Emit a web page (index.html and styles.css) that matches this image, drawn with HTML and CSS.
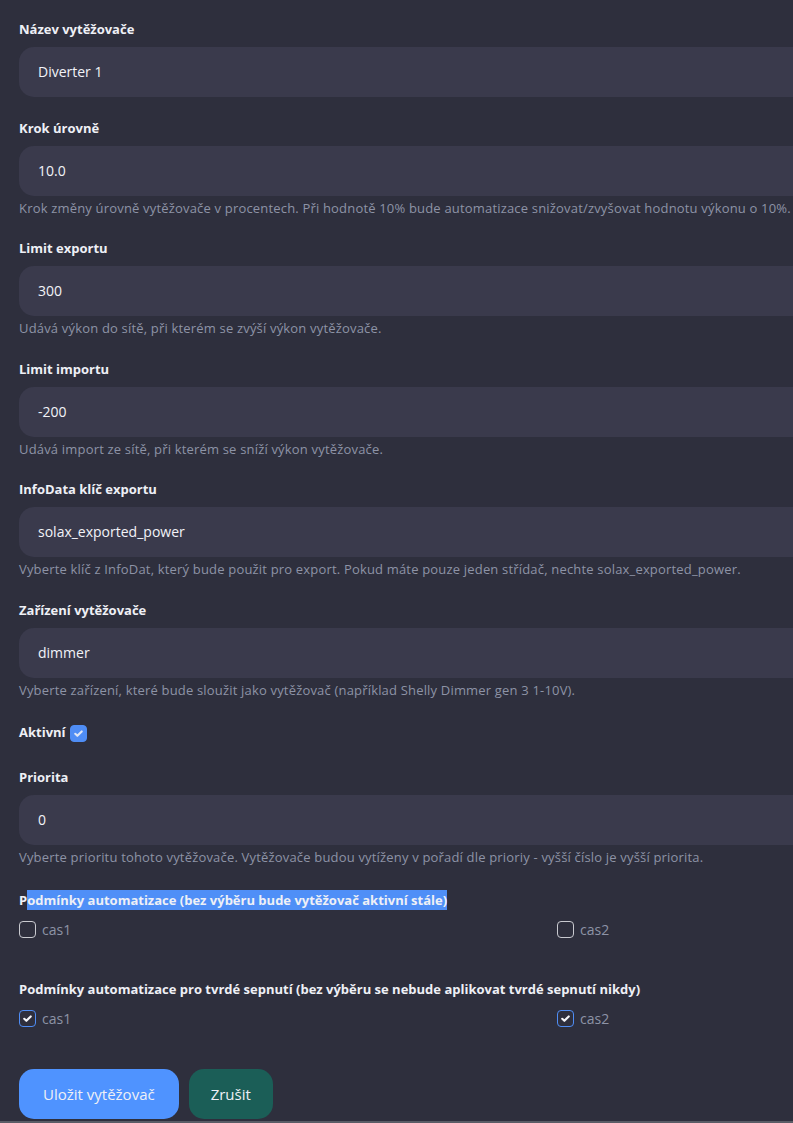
FILE: index.html
```html
<!DOCTYPE html>
<html>
<head>
    <title>Vytěžovač</title>
    <link rel="stylesheet" href="styles.css">
</head>
<body>
    <form class="diverter-form">
        <div class="field">
            <label>Název vytěžovače</label>
            <div class="input">Diverter 1</div>
        </div>

        <div class="field">
            <label>Krok úrovně</label>
            <div class="input">10.0</div>
            <div class="help-text">Krok změny úrovně vytěžovače v procentech. Při hodnotě 10% bude automatizace snižovat/zvyšovat hodnotu výkonu o 10%.</div>
        </div>

        <div class="field">
            <label>Limit exportu</label>
            <div class="input">300</div>
            <div class="help-text">Udává výkon do sítě, při kterém se zvýší výkon vytěžovače.</div>
        </div>

        <div class="field">
            <label>Limit importu</label>
            <div class="input">-200</div>
            <div class="help-text">Udává import ze sítě, při kterém se sníží výkon vytěžovače.</div>
        </div>

        <div class="field">
            <label>InfoData klíč exportu</label>
            <div class="input">solax_exported_power</div>
            <div class="help-text">Vyberte klíč z InfoDat, který bude použit pro export. Pokud máte pouze jeden střídač, nechte solax_exported_power.</div>
        </div>

        <div class="field">
            <label>Zařízení vytěžovače</label>
            <div class="input">dimmer</div>
            <div class="help-text">Vyberte zařízení, které bude sloužit jako vytěžovač (například Shelly Dimmer gen 3 1-10V).</div>
        </div>

        <div class="field active-row">
            <label>Aktivní</label>
            <span class="check filled">
                <svg viewBox="0 0 16 16"><path d="M4 8.4l2.6 2.4L12 5.4"/></svg>
            </span>
        </div>

        <div class="field">
            <label>Priorita</label>
            <div class="input">0</div>
            <div class="help-text">Vyberte prioritu tohoto vytěžovače. Vytěžovače budou vytíženy v pořadí dle prioriy - vyšší číslo je vyšší priorita.</div>
        </div>

        <div class="group">
            <label>P<span class="selected">odmínky automatizace (bez výběru bude vytěžovač aktivní stále)</span></label>
            <div class="options">
                <div class="option"><span class="check"></span>cas1</div>
                <div class="option"><span class="check"></span>cas2</div>
            </div>
        </div>

        <div class="group">
            <label>Podmínky automatizace pro tvrdé sepnutí (bez výběru se nebude aplikovat tvrdé sepnutí nikdy)</label>
            <div class="options">
                <div class="option">
                    <span class="check checked"><svg viewBox="0 0 16 16"><path d="M4 8.4l2.6 2.4L12 5.4"/></svg></span>cas1
                </div>
                <div class="option">
                    <span class="check checked"><svg viewBox="0 0 16 16"><path d="M4 8.4l2.6 2.4L12 5.4"/></svg></span>cas2
                </div>
            </div>
        </div>

        <div class="buttons">
            <button type="button" class="btn-save">Uložit vytěžovač</button>
            <button type="button" class="btn-cancel">Zrušit</button>
        </div>
    </form>
    <div class="page-edge"></div>
</body>
</html>
```

FILE: styles.css
```css
html, body {
    margin: 0;
    padding: 0;
    background-color: #2e2f3d;
    overflow: hidden;
}
body {
    font-family: "Open Sans", Arial, sans-serif;
    color: #eef0f6;
    width: 793px;
    height: 1123px;
    display: flex;
    flex-direction: column;
}
.diverter-form {
    padding: 20px 0 0 19px;
    flex: 1;
    overflow: hidden;
}
.field {
    margin-bottom: 21.6px;
}
label {
    display: block;
    font-size: 13px;
    font-weight: bold;
    line-height: 18px;
    margin-bottom: 9px;
}
.input {
    height: 50px;
    line-height: 50px;
    padding: 0 19px;
    background-color: #3a3a4c;
    border-radius: 15px 0 0 15px;
    font-size: 14px;
    color: #f2f3f8;
}
.help-text {
    font-size: 13px;
    color: #8d93a6;
    line-height: 20px;
    margin-top: 2px;
    letter-spacing: 0.18px;
    white-space: nowrap;
}
.active-row {
    display: flex;
    align-items: center;
    gap: 4px;
    margin-top: 23px;
    margin-bottom: 26px;
}
.active-row label {
    margin: 0;
}
.check {
    width: 15px;
    height: 15px;
    border: 1.5px solid #c9cad0;
    border-radius: 4px;
    display: inline-flex;
    align-items: center;
    justify-content: center;
    flex: none;
}
.check svg {
    width: 13px;
    height: 13px;
    fill: none;
    stroke: #f4f5f9;
    stroke-width: 2.6;
    stroke-linecap: round;
    stroke-linejoin: round;
}
.check.filled {
    background-color: #4f8df5;
    border-color: #4f8df5;
    margin-top: 2px;
}
.check.filled svg {
    stroke: #dfe6f5;
}
.check.checked {
    border-color: #4f8df5;
}
.group {
    margin-top: 24px;
}
.group label {
    margin-bottom: 11px;
}
.selected {
    background-color: #4f8ff7;
    padding: 1px 0;
}
.options {
    display: grid;
    grid-template-columns: 538px 1fr;
    margin-bottom: 40px;
}
.option {
    display: flex;
    align-items: center;
    gap: 6px;
    font-size: 14px;
    color: #8d93a6;
    height: 20px;
}
.buttons {
    display: flex;
    gap: 10px;
    margin-top: 2px;
}
button {
    height: 50px;
    border: none;
    border-radius: 15px;
    font-family: "Open Sans", Arial, sans-serif;
    font-size: 15px;
    color: #eef0f6;
    padding: 0 22px;
    cursor: pointer;
}
.btn-save {
    background-color: #4f93ff;
    padding: 0 24px;
}
.btn-cancel {
    background-color: #1b5e57;
}
.page-edge {
    height: 2px;
    background-color: #5a5c66;
}
```
